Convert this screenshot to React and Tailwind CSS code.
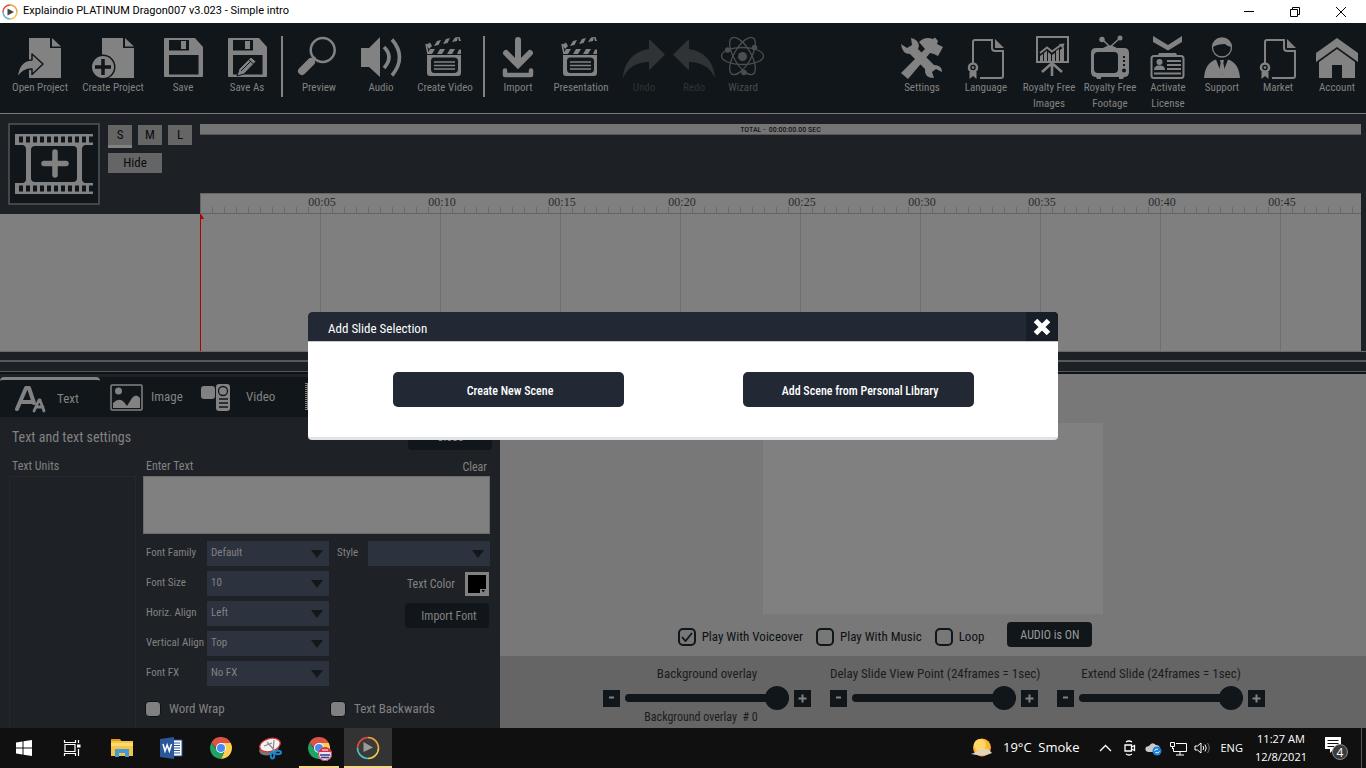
import React from "react";

const INK = "#10161a";
const G = "#828282";

function Icon({ children, color = G }) {
  return (
    <svg viewBox="-4 0 52 44" width="52" height="44" className="shrink-0 overflow-visible" fill={color} stroke="none" aria-hidden="true">
      {children}
    </svg>
  );
}

const Page = () => (
  <>
    <path d="M11 2H32V12H43V42H11Z" />
    <path d="M34 2L43 10.500H34Z" />
  </>
);

const OpenIcon = () => (
  <Icon>
    <Page />
    <path d="M-1 42C0 31 5 24 14 24V18L25 28L14 38.500V33C8 33 3 36 -1 42Z" stroke={INK} strokeWidth="1.500" strokeLinejoin="round" />
  </Icon>
);
const CreateIcon = () => (
  <Icon>
    <Page />
    <circle cx="12" cy="31" r="12.500" fill={INK} />
    <circle cx="12" cy="31" r="11" />
    <path d="M12 23V39M4 31H20" stroke={INK} strokeWidth="3.500" />
  </Icon>
);
const SaveIcon = ({ edit }) => (
  <Icon>
    <path fillRule="evenodd" d="M4 2H34L42 11V40Q42 41 41 41H4Q3 41 3 40V3Q3 2 4 2ZM8 4V14.500H28V4ZM8 19V38.500H37.500V19Z" />
    <path d="M20 5H25V13H20Z" />
    {edit && (
      <>
        <path d="M26 21L31 25.500L19 38L12 40L14 33Z" stroke={INK} />
        <path d="M24 24L28.500 28M16 35L26 25" stroke={INK} strokeWidth="1" fill="none" />
      </>
    )}
  </Icon>
);
const PreviewIcon = () => (
  <Icon>
    <circle cx="25.700" cy="14" r="12" fill="none" stroke={G} strokeWidth="2.500" />
    <path d="M14 26L5 35" stroke={G} strokeWidth="8" strokeLinecap="round" />
    <path d="M18 21L15 25" stroke={G} strokeWidth="2.500" />
  </Icon>
);
const AudioIcon = () => (
  <Icon>
    <path d="M2 12H10L21 1V41L10 31H2Z" />
    <path d="M25 11Q35 21 25 32M33 3.500Q48 21 33 39.500" fill="none" stroke={G} strokeWidth="3.600" />
  </Icon>
);
const ClapIcon = () => (
  <Icon>
    <path fillRule="evenodd" d="M4 19H38V37Q38 40 35 40H7Q4 40 4 37ZM11 21.500Q8 21.500 8 25V33Q8 37 11 37H31Q35 37 35 33V25Q35 21.500 31 21.500Z" />
    <path d="M11 26H32M11 29.500H32M11 33H32" stroke={G} strokeWidth="1.300" />
    <path d="M4 18L7 13H12L9 18ZM14 18L17 13H22L19 18ZM24 18L27 13H32L29 18ZM34 18L36 13.500H38V18Z" />
    <path d="M3 9L7 6.500L9 10L6 13ZM11 10L14 5L18 4L15.500 9ZM20 8L23 3L27 2L24.500 7ZM29 6L32 1.500L35 1L34 5ZM35 1L36.500 1L38 5L36 5Z" />
    <path d="M3 8L5 18" stroke={G} strokeWidth="1.500" />
  </Icon>
);
const ImportIcon = () => (
  <Icon>
    <path d="M22 4V26M10 17L22 29L34 17" fill="none" stroke={G} strokeWidth="6" strokeLinecap="round" />
    <path d="M9 34.500V39H35V34.500" fill="none" stroke={G} strokeWidth="4.500" strokeLinecap="round" strokeLinejoin="round" />
  </Icon>
);
const UndoIcon = ({ flip }) => (
  <Icon color="#2f3336">
    <path transform={flip ? "matrix(-1 0 0 1 44 0)" : undefined} d="M1 42C2 26 12 15 27 13V4Q27 3 28 4L43 18.500L28 33.500Q27 34 27 33V26C15 26 6 31 1 42Z" />
  </Icon>
);
const AtomIcon = () => (
  <Icon color="#4a4e50">
    {[0, 60, 120].map((a) => (
      <ellipse key={a} cx="21.500" cy="20" rx="21" ry="8.500" transform={`rotate(${a} 21.500 20)`} fill="none" stroke="#4a4e50" strokeWidth="1.300" />
    ))}
    <circle cx="21.500" cy="20.500" r="4.500" />
    <circle cx="6.700" cy="14" r="2.800" />
    <circle cx="33.500" cy="11.500" r="2.800" />
    <circle cx="23" cy="36.500" r="2.800" />
  </Icon>
);
const SettingsIcon = () => (
  <Icon>
    <path d="M1 8L7 12L12 9L11 2Q18 3 19 10L18 13L34 29Q42 29 42 36L36 33L32 36L34 42Q24 42 25 33L10 18Q2 18 1 8Z" />
    <path d="M19 6Q25 0 33 3L35 1.500L38 5L37 8L43 11L38 20L34 18L30 17L8 43L1 37L25 13Z" />
  </Icon>
);
const DocBadge = () => (
  <Icon>
    <path d="M9 27V6Q9 4 11 4H28V12Q28 15 31 15H39V40Q39 42 37 42H16" fill="none" stroke={G} strokeWidth="2" />
    <path d="M31 3L40 12H31Z" />
    <circle cx="9" cy="31.500" r="4" fill="none" stroke={G} strokeWidth="2.500" />
    <path d="M5.500 36L12.500 36V43L9 40L5.500 43Z" />
    <circle cx="9" cy="31.500" r="1.300" />
  </Icon>
);
const ChartIcon = () => (
  <Icon>
    <path d="M10 1H41V26H10Z" fill="none" stroke={G} strokeWidth="2" />
    <path d="M13 25V20L16 18V25ZM17 25V17L20 14.500V25ZM21 25V16L24 18.500V25ZM25 25V19L28 17V25ZM29 25V15L32 13V25ZM33 25V14L37 11V25Z" />
    <path d="M13 17L20 11.500L25 15.500L34 9" fill="none" stroke={G} strokeWidth="2" />
    <path d="M32 8L37.500 7.500L36 13Z" />
    <path d="M25 27V40M24 28L15 36M26 28L35 36" stroke={G} strokeWidth="2.600" />
  </Icon>
);
const TvIcon = () => (
  <Icon>
    <path fillRule="evenodd" d="M8 12H36Q41 12 41 17V36Q41 41 36 41H8Q3 41 3 36V17Q3 12 8 12ZM10 16Q6 16 6 20V33Q6 37 10 37H26Q30 37 30 33V20Q30 16 26 16Z" />
    <path d="M14 3L22 11L32 2" fill="none" stroke={G} strokeWidth="1.500" />
    <path d="M15 12Q22 7 29 12Z" />
    <circle cx="14" cy="3.500" r="2.700" />
    <circle cx="32" cy="2" r="2.500" />
    <g fill={INK}>
      <circle cx="36" cy="34.500" r="2" />
      <rect x="35" y="20" width="2" height="2" />
      <rect x="35" y="24" width="2" height="2" />
      <rect x="35" y="28" width="2" height="2" />
    </g>
    <path d="M8 41H13V43H9ZM31 41H36L35 43H31Z" />
  </Icon>
);
const BadgeIcon = () => (
  <Icon>
    <path d="M7 0L22 9L36 0V6L22 14.500L7 6Z" />
    <path d="M12 19L13 17H30L31 19Z" />
    <rect x="5.500" y="20" width="32" height="22" rx="2.500" fill="none" stroke={G} strokeWidth="2" />
    <circle cx="13.500" cy="26" r="3" />
    <path d="M8 34Q8 30 12 29.500H15Q19 30 19 34Z" />
    <path d="M21 25H35M21 29H35M21 33H35M8 37.500H35" stroke={G} strokeWidth="1.800" />
  </Icon>
);
const SupportIcon = () => (
  <Icon>
    <circle cx="22" cy="11.500" r="9.500" fill="none" stroke={G} strokeWidth="1.300" />
    <path d="M12.500 11Q13 2 22 2Q31 2 31.500 11Q28 11 25 8Q18 8 12.500 11Z" />
    <path d="M4 42Q5 27 16 23.500L22 39L28 23.500Q39 27 40 42Z" />
    <path d="M20 24H24L23.300 27L25 35L22 39L19 35L20.700 27Z" />
  </Icon>
);
const HomeIcon = () => (
  <Icon>
    <path d="M22 2L43 17V26L22 11L1 26V17Z" />
    <path d="M22 13L40 26V42H27V29H17V42H4V26Z" />
  </Icon>
);

const LEFT_TOOLS = [
  ["Open Project", "w-[72px]", <OpenIcon />],
  ["Create Project", "w-[74px]", <CreateIcon />],
  ["Save", "w-[66px]", <SaveIcon />],
  ["Save As", "w-[62px]", <SaveIcon edit />],
  null,
  ["Preview", "w-[66px]", <PreviewIcon />],
  ["Audio", "w-[58px]", <AudioIcon />],
  ["Create Video", "w-[70px]", <ClapIcon />],
  null,
  ["Import", "w-[60px]", <ImportIcon />],
  ["Presentation", "w-[66px]", <ClapIcon />],
  ["Undo", "w-[60px] text-[#2f3336]", <UndoIcon />],
  ["Redo", "w-[40px] text-[#2f3336]", <UndoIcon flip />],
  ["Wizard", "w-[58px] text-[#4a4e50]", <AtomIcon />],
];
const RIGHT_TOOLS = [
  ["Settings", "w-16", <SettingsIcon />],
  ["Language", "w-16", <DocBadge />],
  ["Royalty Free Images", "w-[62px]", <ChartIcon />],
  ["Royalty Free Footage", "w-[60px]", <TvIcon />],
  ["Activate License", "w-14", <BadgeIcon />],
  ["Support", "w-[52px]", <SupportIcon />],
  ["Market", "w-[60px]", <DocBadge />],
  ["Account", "w-[58px]", <HomeIcon />],
];

function Tool({ tool }) {
  if (!tool) return <span className="mx-[3px] mt-[13px] h-[61px] w-[2px] shrink-0 bg-[#828282]" />;
  const [label, cls, icon] = tool;
  return (
    <button className={`flex shrink-0 flex-col items-center pt-[13px] text-[11px] leading-4 ${cls}`}>
      {icon}
      <span className="text-center">{label}</span>
    </button>
  );
}

function TitleBar() {
  return (
    <header className="flex h-[23px] items-center bg-white font-[Roboto,'Noto_Sans',sans-serif] text-[11px] text-black">
      <svg viewBox="0 0 16 16" width="16" height="16" className="mx-[2px]" aria-hidden="true">
        <path d="M8 1A7 7 0 0 1 15 8" fill="none" stroke="#e8a33a" strokeWidth="1.500" />
        <path d="M15 8A7 7 0 0 1 8 15" fill="none" stroke="#efc55c" strokeWidth="1.500" />
        <path d="M8 15A7 7 0 0 1 1 8" fill="none" stroke="#63b7c4" strokeWidth="1.500" />
        <path d="M1 8A7 7 0 0 1 8 1" fill="none" stroke="#e04a3a" strokeWidth="1.500" />
        <path d="M5.500 4.500L12 8L5.500 11.500Z" fill="#444" />
      </svg>
      <h1 className="pl-[3px]">Explaindio PLATINUM Dragon007 v3.023 - Simple intro</h1>
      <div className="ml-auto mr-[2px] flex h-full">
        <button aria-label="Minimize" className="grid w-[46px] place-items-center">
          <svg width="10" height="10"><path d="M0 4.500H10" stroke="#000" /></svg>
        </button>
        <button aria-label="Restore" className="grid w-[46px] place-items-center">
          <svg width="10" height="10" fill="none" stroke="#000"><path d="M.5 2.500H7.500V9.500H.5ZM2.500 2.500V.5H9.500V7.500H7.500" /></svg>
        </button>
        <button aria-label="Close window" className="grid w-[46px] place-items-center">
          <svg width="10" height="10" stroke="#000"><path d="M0 0L10 10M10 0L0 10" /></svg>
        </button>
      </div>
    </header>
  );
}

function Timeline() {
  const marks = ["00:05", "00:10", "00:15", "00:20", "00:25", "00:30", "00:35", "00:40", "00:45"];
  return (
    <section className="flex h-[238px] border-b border-[#6a6a6a] bg-[#1d2025]" aria-label="Timeline">
      <div className="flex w-[200px] shrink-0 flex-col">
        <div className="flex h-[100px] gap-2 pl-2 pt-[9px]">
          <button aria-label="Add slide" className="grid h-[82px] w-[92px] place-items-center border-2 border-[#43474a] bg-[#10161a]">
            <svg viewBox="0 0 78 60" width="78" height="60" fill={G} aria-hidden="true">
              <path d="M0 0H78V11H70Q67 12 67 15V45Q67 48 70 49H78V60H0V49H8Q11 48 11 45V15Q11 12 8 11H0ZM20 12Q16 12 16 16V44Q16 48 20 48H58Q62 48 62 44V16Q62 12 58 12Z" fillRule="evenodd" />
              <path d="M4 5.500H78M4 54.500H78" stroke={INK} strokeWidth="6" strokeDasharray="4 3" />
              <path d="M40 18V41M29 29.500H51" stroke={G} strokeWidth="5.500" strokeLinecap="round" />
            </svg>
          </button>
          <div className="pt-[2px] text-[13px] text-[#0a0c0e]">
            <div className="flex gap-[6px]">
              <button className="h-[23px] w-6 border-b-[3px] border-[#828282] bg-[#656565] leading-5">S</button>
              <button className="h-5 w-6 bg-[#656565] leading-5">M</button>
              <button className="h-5 w-6 bg-[#656565] leading-5">L</button>
            </div>
            <button className="mt-[5px] block h-5 w-[54px] bg-[#656565] leading-5">Hide</button>
          </div>
        </div>
        <div className="flex-1 bg-[#7f7f7f]" />
      </div>
      <div className="mr-[5px] flex min-w-0 flex-1 flex-col">
        <div className="mt-[10px] h-[11px] border-b border-[#555] bg-[#747474] text-center text-[8px] leading-[11px] text-black">TOTAL -&nbsp; 00:00:00.00 SEC</div>
        <div className="mt-[58px] flex h-[21px] overflow-hidden border-b border-l border-t border-[#646464] bg-[#7f7f7f] bg-[repeating-linear-gradient(to_right,transparent_0_11px,#6a6a6a_11px_12px)] bg-[length:100%_6px] bg-bottom bg-no-repeat pl-[61px] font-['Liberation_Serif',serif] text-xs leading-4 text-[#2a2a2a]">
          {marks.map((m) => (
            <span key={m} className="w-[120px] shrink-0 text-center">{m}</span>
          ))}
        </div>
        <div className="flex-1 border-l border-[#b00000] bg-[#7f7f7f] bg-[repeating-linear-gradient(to_right,transparent_0_119px,#6e6e6e_119px_120px)]">
          <svg width="3" height="5" className="block" aria-hidden="true"><path d="M0 0L3 5H0Z" fill="#b00000" /></svg>
        </div>
      </div>
    </section>
  );
}

function Pick({ id, value, className }) {
  return (
    <span className={`grid h-[25px] items-center ${className}`}>
      <select id={id} defaultValue={value} className="col-start-1 row-start-1 h-full w-full appearance-none bg-[#2c323e] px-1 text-[11px] text-[#828282]">
        <option>{value}</option>
      </select>
      <svg width="12" height="8" className="pointer-events-none col-start-1 row-start-1 mr-[6px] justify-self-end" aria-hidden="true"><path d="M0 0H12L6 8Z" fill="#14171a" /></svg>
    </span>
  );
}

const FIELDS = [
  ["Font Family", "Default"],
  ["Font Size", "10"],
  ["Horiz. Align", "Left"],
  ["Vertical Align", "Top"],
  ["Font FX", "No FX"],
];

function TextPanel() {
  return (
    <section className="flex w-[500px] shrink-0 flex-col bg-[#1e2126] pt-[3px] text-xs text-[#828282]">
      <div role="tablist" className="flex h-10 items-stretch overflow-hidden bg-[#10161a] text-[13px]">
        <button role="tab" aria-selected="true" className="flex w-[100px] shrink-0 items-center gap-[11px] rounded-t border-t-[3px] border-[#828282] pl-[15px]">
          <svg viewBox="0 0 31 28" width="31" height="28" fill="none" stroke={G} aria-hidden="true">
            <path d="M2 24L11 3H14L19 18M6 17H17" strokeWidth="4" strokeLinecap="round" strokeLinejoin="round" />
            <path d="M19 26L24 15H25L29 26M21 22H28" strokeWidth="2.800" strokeLinecap="round" strokeLinejoin="round" />
          </svg>
          Text
        </button>
        <button role="tab" aria-selected="false" className="flex w-[91px] shrink-0 items-center gap-2 pl-[10px]">
          <svg viewBox="0 0 33 27" width="33" height="27" fill={G} aria-hidden="true">
            <rect x="1" y="1" width="31" height="25" rx="1" fill="none" stroke={G} strokeWidth="1.500" />
            <circle cx="8.500" cy="7" r="3.500" />
            <path d="M3 24V19Q9 13 14 18L17 22L22 14Q26 9 30 14V24Z" />
          </svg>
          Image
        </button>
        <button role="tab" aria-selected="false" className="flex w-[114px] shrink-0 items-center gap-4 pl-[10px]">
          <svg viewBox="0 0 29 27" width="29" height="27" fill={G} aria-hidden="true">
            <rect x="0" y="2" width="14" height="13" rx="3" />
            <rect x="15" y="0" width="14" height="27" rx="3" />
            <circle cx="22" cy="7" r="4.500" fill={G} stroke={INK} strokeWidth="1.300" />
            <path d="M18 15H27M18 19H27M18 23H27" stroke={INK} strokeWidth="1.500" />
          </svg>
          Video
        </button>
        <svg width="30" height="27" className="mt-[6px] shrink-0" aria-hidden="true">
          <path d="M1 0V27M29 0V27" stroke={G} strokeWidth="2" strokeDasharray="1 1" />
          <path d="M2.500 0V27" stroke={G} />
        </svg>
      </div>
      <div className="flex h-10 items-center justify-between pl-3 pr-2">
        <h2 className="text-sm">Text and text settings</h2>
        <button className="h-[26px] w-[84px] rounded-sm bg-[#10161a]">Close</button>
      </div>
      <div className="flex flex-1">
        <div className="ml-[9px] flex w-[127px] shrink-0 flex-col">
          <h3 className="h-[19px] pl-[3px] leading-[18px]">Text Units</h3>
          <div className="flex-1 border border-b-0 border-[#24282d]" />
        </div>
        <div className="ml-[7px] mr-[10px] flex min-w-0 flex-1 flex-col">
          <div className="flex h-[19px] justify-between px-[3px] leading-[18px]">
            <label htmlFor="enter">Enter Text</label>
            <button>Clear</button>
          </div>
          <textarea id="enter" className="block h-[58px] w-full resize-none border border-[#6a6a6a] bg-[#808080]" />
          <div className="mt-[7px] flex">
            <div className="flex flex-col gap-[5px]">
              {FIELDS.map(([label, value]) => (
                <div key={label} className="flex h-[25px]">
                  <label htmlFor={label} className="w-16 whitespace-nowrap pl-[3px] text-[11px] leading-6">{label}</label>
                  <Pick id={label} value={value} className="w-[122px]" />
                </div>
              ))}
            </div>
            <div className="flex flex-1 flex-col items-end">
              <div className="flex w-full pl-2 text-[11px]">
                <label htmlFor="style" className="w-[31px] leading-6">Style</label>
                <Pick id="style" value="" className="flex-1" />
              </div>
              <div className="mt-[6px] flex items-center gap-[10px] pr-px">
                <span id="color-label">Text Color</span>
                <button aria-labelledby="color-label" className="flex size-6 items-end justify-end border-[3px] border-[#828282] bg-black">
                  <svg width="6" height="4" aria-hidden="true"><rect width="6" height="4" fill={G} /><path d="M1.500 1H5L3.200 3.500Z" fill="#000" /></svg>
                </button>
              </div>
              <button className="mr-px mt-[7px] h-[25px] w-[84px] rounded-sm bg-[#10161a] pl-1">Import Font</button>
            </div>
          </div>
          <div className="mt-[14px] flex text-[13px]">
            {["Word Wrap", "Text Backwards"].map((t) => (
              <label key={t} className="flex w-[185px] shrink-0 items-center gap-2 pl-[2px]">
                <input type="checkbox" className="size-4 appearance-none rounded border border-[#0c1114] bg-[#808080]" />
                {t}
              </label>
            ))}
          </div>
        </div>
      </div>
    </section>
  );
}

function Slider({ id, label, note }) {
  return (
    <div className="w-[208px] text-center">
      <label htmlFor={id} className="block whitespace-nowrap leading-5">{label}</label>
      <div className="mt-[2px] flex h-6 items-center gap-[5px]">
        <button aria-label={`Decrease ${label}`} className="grid size-[17px] shrink-0 place-items-center bg-[#10161a]">
          <svg width="9" height="9"><path d="M2 3.500H7" stroke="#828282" strokeWidth="2" /></svg>
        </button>
        <input
          id={id}
          type="range"
          defaultValue="100"
          className="h-2 w-full min-w-0 appearance-none rounded bg-[#10161a] [&::-webkit-slider-thumb]:size-6 [&::-webkit-slider-thumb]:appearance-none [&::-webkit-slider-thumb]:rounded-full [&::-webkit-slider-thumb]:bg-[#10161a]"
        />
        <button aria-label={`Increase ${label}`} className="grid size-[17px] shrink-0 place-items-center bg-[#10161a]">
          <svg width="9" height="9"><path d="M.5 4.500H8.500M4.500 .5V8.500" stroke="#828282" strokeWidth="2" /></svg>
        </button>
      </div>
      {note && <p className="pr-3 text-xs leading-[14px]">{note}</p>}
    </div>
  );
}

function Preview() {
  return (
    <section className="flex min-w-0 flex-1 flex-col bg-[#787878] text-[13px] text-[#1a1c1e]" aria-label="Preview">
      <div className="mx-auto mt-[49px] h-[191px] w-[340px] bg-[#808080]" />
      <div className="mt-2 flex items-center justify-center gap-[13px] pr-24 text-[#0c1013]">
        {["Play With Voiceover", "Play With Music", "Loop"].map((t, i) => (
          <label key={t} className="flex items-center gap-[6px] pt-1">
            <span className="grid place-items-center">
              <input type="checkbox" defaultChecked={i === 0} className="peer col-start-1 row-start-1 size-[18px] appearance-none rounded-[5px] border-2 border-[#10161a]" />
              <svg width="12" height="10" className="pointer-events-none col-start-1 row-start-1 hidden peer-checked:block" aria-hidden="true"><path d="M1 5L4.500 9L11 1" fill="none" stroke="#10161a" strokeWidth="1.800" /></svg>
            </span>
            {t}
          </label>
        ))}
        <button className="ml-[10px] h-[25px] w-[85px] rounded-sm bg-[#10161a] text-xs text-[#9a9a9a]">AUDIO is ON</button>
      </div>
      <div className="mt-[9px] flex flex-1 justify-center gap-[19px] bg-[#656565] pl-[2px] pt-2">
        <Slider id="overlay" label="Background overlay" note={<>Background overlay &nbsp;# 0</>} />
        <Slider id="delay" label="Delay Slide View Point (24frames = 1sec)" />
        <Slider id="extend" label="Extend Slide (24frames = 1sec)" />
      </div>
    </section>
  );
}

function Chrome({ badge }) {
  return (
    <svg viewBox="0 0 24 24" width="24" height="24" className="overflow-visible" aria-hidden="true">
      <path d="M12 12V7H21.800A11 11 0 0 1 12 23L16 14Z" fill="#fcd04f" />
      <path d="M12 12L15.500 15L12 23A11 11 0 0 1 2.500 6.500L8 14Z" fill="#1fa463" />
      <path d="M2.500 6.500A11 11 0 0 1 21.800 7H12L7 12Z" fill="#de5347" />
      <circle cx="12" cy="12" r="5" fill="#fff" />
      <circle cx="12" cy="12" r="4" fill="#4a8af4" />
      {badge && (
        <>
          <circle cx="18" cy="18" r="7" fill="#e9e4ef" />
          <path d="M11.500 16A7 7 0 0 1 24.500 16Z" fill="#d8303a" />
          <circle cx="18" cy="18" r="6.500" fill="none" stroke="#c43b50" />
          <path d="M13 19H23M14 21.500H22" stroke="#343a8c" strokeWidth="1.500" />
          <path d="M15 14H21" stroke="#fff" />
        </>
      )}
    </svg>
  );
}

const TASKS = [
  ["Start", <svg width="16" height="16" fill="#fff"><path d="M0 2.500L6.500 1.500V7.500H0ZM7.500 1.300L16 0V7.500H7.500ZM0 8.500H6.500V14.500L0 13.500ZM7.500 8.500H16V16L7.500 14.700Z" /></svg>, "w-12"],
  ["Task view", <svg width="18" height="16" fill="none" stroke="#fff" strokeWidth="1.200"><path d="M2 4.500H12V11.500H2ZM1.500 0V2.500H12.500V0M1.500 16V13.500H12.500V16M15.500 0V3M15.500 9V16" /><path d="M14 4.500H17.500V7.500H14Z" fill="#fff" stroke="none" /></svg>, "w-12"],
  ["File Explorer", <svg width="22" height="20"><path d="M0 1H9L10 3H22V18H0Z" fill="#f5c445" /><path d="M0 1H9V3H0Z" fill="#dd9a16" /><path d="M0 5H22V8H0Z" fill="#ffda72" /><path d="M4 19V11H18V19H14V15H8V19Z" fill="#3f9bdc" /></svg>, "w-[51px]"],
  ["Word", <svg width="23" height="22"><path d="M12 3H22V19H12Z" fill="#fff" stroke="#2b579a" /><path d="M14 6H20M14 8.500H20M14 11H20M14 13.500H20M14 16H20" stroke="#2b579a" /><path d="M0 2L14 0V22L0 20Z" fill="#2b579a" /><path d="M3 7L5 14L7.200 8L9.300 14L11.500 7" fill="none" stroke="#fff" strokeWidth="1.500" /></svg>, "w-[49px]"],
  ["Chrome", <Chrome />, "w-[49px]"],
  ["Snipping Tool", <svg width="24" height="23"><ellipse cx="11" cy="12" rx="10" ry="6" transform="rotate(-16 11 12)" fill="#777" /><ellipse cx="12" cy="8" rx="10.500" ry="6.500" transform="rotate(-16 12 8)" fill="#f4f4f4" stroke="#d13438" strokeWidth="1.300" /><path d="M9 5L18 15M16 3L15 15M6 9L14 6" stroke="#888" strokeWidth="1.200" /><g fill="none" stroke="#1a86cf" strokeWidth="2"><ellipse cx="14.500" cy="18.500" rx="1.800" ry="3" /><ellipse cx="20" cy="15.500" rx="3" ry="1.800" /></g></svg>, "w-[49px]"],
  ["Chrome profile", <Chrome badge />, "w-[50px] bg-[linear-gradient(#f7d588,#f7d588)] bg-[length:40px_2px] bg-bottom bg-no-repeat"],
  ["Explaindio", <svg width="24" height="24"><circle cx="12" cy="12" r="11" fill="#3a3a3a" /><g fill="none" strokeWidth="1.600"><path d="M1.500 12A10.500 10.500 0 0 1 12 1.500" stroke="#e0483c" /><path d="M12 1.500A10.500 10.500 0 0 1 22.500 12" stroke="#e8a33a" /><path d="M22.500 12A10.500 10.500 0 0 1 12 22.500" stroke="#e8d04b" /><path d="M12 22.500A10.500 10.500 0 0 1 1.500 12" stroke="#4fc0c0" /></g><path d="M7.500 6L17 11.500L7.500 16Z" fill="#9a9a9a" /></svg>, "w-12 bg-[#333] shadow-[inset_0_-2px_0_#f7d588]"],
];

function Taskbar() {
  return (
    <footer className="flex h-10 items-stretch bg-[#101010] font-['Open_Sans','Noto_Sans',sans-serif] text-[11px] text-white">
      {TASKS.map(([name, icon, cls]) => (
        <button key={name} aria-label={name} className={`grid shrink-0 place-items-center ${cls}`}>{icon}</button>
      ))}
      <div className="ml-auto flex items-center">
        <svg width="22" height="20" aria-hidden="true">
          <circle cx="11" cy="9.500" r="9" fill="#fbb62c" />
          <circle cx="9" cy="7" r="6" fill="#ffd766" />
          <path d="M3 15Q7 11 11 12Q15 8 20 14L21 15Q14 19 0 16Z" fill="#e2d3c0" />
        </svg>
        <span className="ml-[10px] whitespace-nowrap text-[13px]">19°C&nbsp; Smoke</span>
        <button aria-label="Show hidden icons" className="ml-5"><svg width="13" height="8"><path d="M1 7L6.500 1.500L12 7" fill="none" stroke="#fff" strokeWidth="1.300" /></svg></button>
        <svg width="14" height="16" className="ml-[11px]" fill="none" stroke="#fff" strokeWidth="1.300" aria-hidden="true"><path d="M2 5H8.500V11H2ZM8.500 7L11.500 5.500V10.500L8.500 9M3 2Q6 0 9 2M3 14Q6 16 9 14" /></svg>
        <svg width="17" height="15" className="ml-2" aria-hidden="true"><path d="M3 11Q-1 10 1 6Q3 5 4 5Q7 0 11 4Q15 4 15 8L10 11Z" fill="#c9c9c9" /><circle cx="12" cy="10" r="4.500" fill="#1a7fd6" /><path d="M9.500 10Q10 7.500 13 8.200M14.500 10.500Q13 12.800 10.500 11.500" fill="none" stroke="#fff" /></svg>
        <svg width="17" height="15" className="ml-2" fill="none" stroke="#fff" aria-hidden="true"><path d="M6 2.500H16.500V10.500H3.500V7M10 10.500V14M6 14H14M.5 1.500H4.500V5.500H.5ZM2.500 5.500V8" /></svg>
        <svg width="17" height="14" className="ml-[7px]" fill="none" stroke="#fff" aria-hidden="true"><path d="M1 5H3.500L7 2V12L3.500 9H1Z" /><path d="M9 5Q10.500 7 9 9" /><path d="M11 3.500Q13.500 7 11 10.500" /><path d="M13.500 2Q17 7 13.500 12" stroke="#777" /></svg>
        <span className="ml-[9px]">ENG</span>
        <div className="ml-3 text-center leading-[18px]">11:27 AM<br />12/8/2021</div>
        <button aria-label="4 notifications" className="ml-[17px] mr-[11px]">
          <svg width="26" height="26"><path d="M1 2H17V14H10L6 18V14H1Z" fill="#fff" /><path d="M3.500 5.500H14.500M3.500 8.500H14.500M3.500 11.500H10" stroke="#101010" /><circle cx="16" cy="17" r="7.500" fill="#3a3a3a" stroke="#8a8a8a" /><text x="16" y="21.500" fontSize="12" fill="#fff" textAnchor="middle">4</text></svg>
        </button>
        <span className="mr-1 h-full w-px bg-[#555]" />
      </div>
    </footer>
  );
}

function SlideDialog() {
  return (
    <div className="fixed inset-0 flex items-start justify-center pt-[312px]">
      <div role="dialog" aria-labelledby="dialog-title" className="w-[750px] overflow-hidden rounded border-b-[3px] border-[#e2e3e8] bg-white text-[13px] text-white">
        <div className="flex h-[30px] items-center justify-between border-b border-[#c4c8ce] bg-[#222935]">
          <h2 id="dialog-title" className="pl-5 pt-1">Add Slide Selection</h2>
          <button aria-label="Close" className="grid h-full w-8 place-items-center bg-[#181e28]">
            <svg width="18" height="18" aria-hidden="true"><path d="M2.500 2.500L15.500 15.500M15.500 2.500L2.500 15.500" stroke="#fff" strokeWidth="5" /></svg>
          </button>
        </div>
        <div className="flex h-[95px] justify-center gap-[119px] pt-[30px] text-xs font-medium">
          <button className="h-[35px] w-[231px] rounded-[5px] bg-[#222935] pl-1 pt-[3px]">Create New Scene</button>
          <button className="h-[35px] w-[231px] rounded-[5px] bg-[#222935] pl-1 pt-[3px]">Add Scene from Personal Library</button>
        </div>
      </div>
    </div>
  );
}

export default function App() {
  return (
    <div className="flex min-h-screen flex-col bg-[#1d2025] font-['Liberation_Sans_Narrow','Roboto_Condensed','Open_Sans_Condensed','Liberation_Sans',sans-serif]">
      <TitleBar />
      <nav className="flex h-[91px] justify-between border-b border-[#77797b] bg-[#10161a] text-[#828282]" aria-label="Main tools">
        <div className="flex pl-1">{LEFT_TOOLS.map((t, i) => <Tool key={i} tool={t} />)}</div>
        <div className="flex">{RIGHT_TOOLS.map((t) => <Tool key={t[0]} tool={t} />)}</div>
      </nav>
      <Timeline />
      <div className="h-[22px] border-b-2 border-[#101216] pt-2">
        <div className="h-[12px] border-b border-t-2 border-[#55585b]" />
      </div>
      <main className="flex flex-1 items-stretch">
        <TextPanel />
        <Preview />
      </main>
      <Taskbar />
      <SlideDialog />
    </div>
  );
}
